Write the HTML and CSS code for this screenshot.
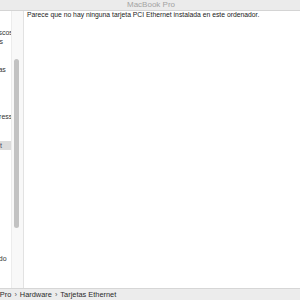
FILE: index.html
```html
<!DOCTYPE html>
<html lang="es">
<head>
    <meta charset="UTF-8">
    <meta name="viewport" content="width=device-width, initial-scale=1.0">
    <title>Información del sistema</title>
    <link rel="stylesheet" href="styles.css">
</head>
<body>
    <div class="window">
        <div class="titlebar">MacBook Pro</div>

        <div class="main">
            <div class="sidebar">
                <ul class="tree">
                    <li>Controlador</li>
                    <li>Diagnóstico</li>
                    <li>Grabación de discos</li>
                    <li>Lector de tarjetas</li>
                    <li>FireWire</li>
                    <li>Impresoras</li>
                    <li>Gráficos/Pantallas</li>
                    <li>Memoria</li>
                    <li>PCI</li>
                    <li>SAS</li>
                    <li>SPI</li>
                    <li>SATA/SATA Express</li>
                    <li>SCSI paralelo</li>
                    <li>Thunderbolt</li>
                    <li class="selected">Tarjetas Ethernet</li>
                    <li>USB</li>
                    <li class="group">Red</li>
                    <li>Cortafuegos</li>
                    <li>Ubicaciones</li>
                    <li>Volúmenes</li>
                    <li>WWAN</li>
                    <li>Wi-Fi</li>
                    <li class="group">Software</li>
                    <li>Accesibilidad</li>
                    <li>Aplicaciones</li>
                    <li>Componentes</li>
                    <li>Software instalado</li>
                    <li>Tipos de letra</li>
                </ul>
                <div class="scrollbar">
                    <div class="thumb"></div>
                </div>
            </div>

            <div class="content">
                <p>Parece que no hay ninguna tarjeta PCI Ethernet instalada en este ordenador.</p>
            </div>
        </div>

        <div class="pathbar">
            <span>MacBook Pro</span>
            <span class="sep">›</span>
            <span>Hardware</span>
            <span class="sep">›</span>
            <span>Tarjetas Ethernet</span>
        </div>
    </div>
</body>
</html>
```

FILE: styles.css
```css
html, body {
    margin: 0;
    padding: 0;
    height: 300px;
    overflow: hidden;
    background-color: #ffffff;
}
.window {
    display: flex;
    flex-direction: column;
    width: 428px;
    height: 300px;
    margin-left: -63px;
    font-family: "Liberation Sans", Arial, sans-serif;
    color: #222;
}
.titlebar {
    height: 10px;
    line-height: 9px;
    font-size: 8px;
    text-align: center;
    color: #a3a3a3;
    background-color: #ebebeb;
    border-bottom: 1px solid #d4d4d4;
    overflow: hidden;
}
.main {
    flex: 1;
    display: flex;
    min-height: 0;
}
.sidebar {
    display: flex;
    width: 86px;
    border-right: 1px solid #e2e2e2;
    background-color: #ffffff;
}
.tree {
    flex: 1;
    list-style: none;
    margin: -2px 0 0;
    padding: 0;
    overflow: hidden;
    font-size: 7px;
    line-height: 9.4px;
    white-space: nowrap;
}
.tree li {
    padding-left: 12px;
    color: #333;
}
.tree li.group {
    padding-left: 6px;
    font-weight: bold;
    color: #777;
}
.tree li.selected {
    background-color: #dcdcdc;
    color: #3b4a66;
}
.scrollbar {
    width: 8px;
    border-left: 1px solid #ececec;
    background-color: #f8f8f8;
    padding: 48px 1px 0 2px;
}
.thumb {
    width: 5px;
    height: 169px;
    border-radius: 3px;
    background-color: #c2c2c2;
}
.content {
    flex: 1;
    padding-left: 3px;
    background-color: #ffffff;
}
.content p {
    margin: 0;
    font-size: 6.8px;
    line-height: 8px;
    color: #1a1a1a;
}
.pathbar {
    display: flex;
    align-items: center;
    height: 11px;
    padding-left: 30px;
    font-size: 7.4px;
    color: #2a2a2a;
    background-color: #ececec;
    border-top: 1px solid #d6d6d6;
    white-space: nowrap;
}
.pathbar .sep {
    margin: 0 3px;
    color: #555;
}
```
